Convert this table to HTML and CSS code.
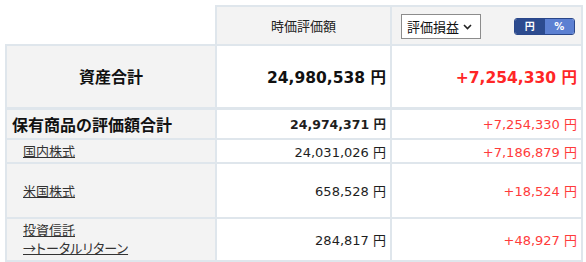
FILE: index.html
```html
<!DOCTYPE html>
<html lang="ja">
<head>
<meta charset="utf-8">
<title>資産合計</title>
<link rel="stylesheet" href="styles.css">
</head>
<body>
<table class="summary">
  <colgroup>
    <col class="c1"><col class="c2"><col class="c3">
  </colgroup>
  <tr class="r-head">
    <th class="blank"></th>
    <th class="h-cell">時価評価額</th>
    <th class="h-cell h-ctrl">
      <div class="ctrl">
        <div class="fake-select">
          <span>評価損益</span>
          <svg class="chev" width="9" height="6" viewBox="0 0 9 6"><path d="M1 1 L4.5 4.5 L8 1" fill="none" stroke="#222" stroke-width="1.6"/></svg>
        </div>
        <div class="toggle">
          <span class="t-on">円</span><span class="t-off">%</span>
        </div>
      </div>
    </th>
  </tr>
  <tr class="r-total">
    <th class="lbl lbl-center">資産合計</th>
    <td class="num big">24,980,538 円</td>
    <td class="num big red">+7,254,330 円</td>
  </tr>
  <tr class="r-sub">
    <th class="lbl lbl-bold">保有商品の評価額合計</th>
    <td class="num bold">24,974,371 円</td>
    <td class="num red">+7,254,330 円</td>
  </tr>
  <tr class="r-a">
    <th class="lbl lbl-item"><a href="#">国内株式</a></th>
    <td class="num">24,031,026 円</td>
    <td class="num red">+7,186,879 円</td>
  </tr>
  <tr class="r-b">
    <th class="lbl lbl-item"><a href="#">米国株式</a></th>
    <td class="num">658,528 円</td>
    <td class="num red">+18,524 円</td>
  </tr>
  <tr class="r-c">
    <th class="lbl lbl-item"><a href="#">投資信託</a><br><a href="#" class="kana">→トータルリターン</a></th>
    <td class="num">284,817 円</td>
    <td class="num red">+48,927 円</td>
  </tr>
</table>
</body>
</html>
```

FILE: styles.css
```css
html, body {
  margin: 0;
  background: #ffffff;
}
body {
  padding: 5px 5px 0 5px;
  font-family: "DejaVu Sans", "Noto Sans CJK JP", sans-serif;
  color: #1e1e1e;
}
.summary {
  border-collapse: collapse;
  table-layout: fixed;
  width: 576px;
}
.c1 { width: 210px; }
.c2 { width: 175px; }
.c3 { width: 191px; }

.summary th,
.summary td {
  border: 2px solid #dfe6ec;
  padding: 0;
  vertical-align: middle;
}
.summary .blank {
  border-top: none;
  border-left: none;
  background: #ffffff;
}
.r-head { height: 39px; }
.r-total { height: 63px; }
.r-sub { height: 31px; }
.r-a { height: 24px; }
.r-b { height: 55px; }
.r-c { height: 43px; }

.r-total th, .r-total td { border-bottom-width: 3px; }
.r-c th, .r-c td { border-bottom-width: 3px; }

.h-cell {
  background: #f3f3f3;
  font-family: "Noto Sans CJK JP", sans-serif;
  font-weight: normal;
  font-size: 13px;
  color: #222;
  text-align: center;
}
.ctrl {
  display: flex;
  align-items: center;
  justify-content: space-between;
  padding: 1px 6px 0 9px;
}
.fake-select {
  box-sizing: border-box;
  width: 80px;
  height: 25px;
  border: 1px solid #8c8c8c;
  background: #ffffff;
  display: flex;
  align-items: center;
  justify-content: space-between;
  padding: 0 8px 0 5px;
  font-size: 13px;
  color: #111;
}
.chev { display: block; margin-top: 1px; }
.toggle {
  display: flex;
  width: 61px;
  height: 17px;
  box-sizing: border-box;
  border: 1px solid #2a478a;
  border-radius: 3px;
  overflow: hidden;
  font-family: "DejaVu Sans", "Noto Sans CJK JP", sans-serif;
  font-size: 10px;
  font-weight: bold;
  color: #ffffff;
  line-height: 15px;
}
.toggle span {
  flex: 1;
  text-align: center;
}
.t-on { background: #2c4b8f; }
.t-off { background: #5c80d2; }

.lbl {
  background: #f3f3f3;
  text-align: left;
  font-family: "Noto Sans CJK JP", sans-serif;
  font-weight: normal;
}
.lbl-center {
  text-align: center;
  font-size: 16px;
  font-weight: bold;
  color: #111;
}
.lbl-bold {
  font-size: 16px;
  font-weight: bold;
  color: #111;
  padding-left: 5px !important;
}
.lbl-item {
  font-size: 13px;
  line-height: 18px;
  padding-left: 16px !important;
}
.lbl-item a {
  color: #333333;
  text-decoration: underline;
}
.kana {
  font-feature-settings: "palt";
}

.num {
  text-align: right;
  padding-right: 4px !important;
  font-size: 13px;
  color: #1e1e1e;
  white-space: nowrap;
}
.num.bold {
  font-weight: bold;
  font-size: 12.5px;
}
.num.big {
  font-weight: bold;
  font-size: 15.5px;
  color: #111;
}
.num.red {
  color: #ff3b3b;
}
.num.big.red {
  color: #ff2626;
}
.r-sub .num.red {
  font-size: 13px;
}
```
